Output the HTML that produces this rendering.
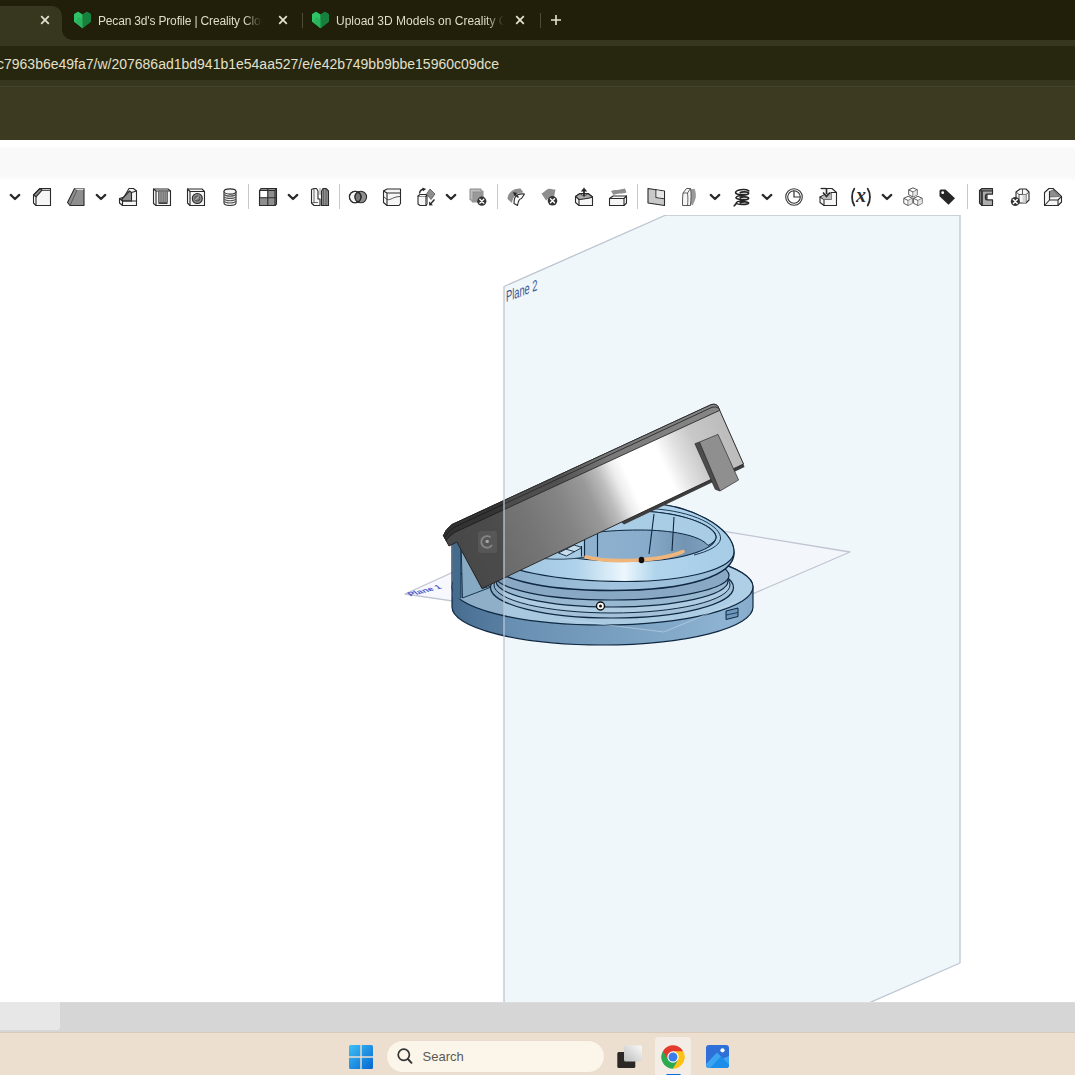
<!DOCTYPE html>
<html><head><meta charset="utf-8">
<style>
*{margin:0;padding:0;box-sizing:border-box}
html,body{width:1075px;height:1075px;overflow:hidden;background:#fff;font-family:"Liberation Sans",sans-serif}
#root{position:relative;width:1075px;height:1075px;overflow:hidden;background:#fff}
.abs{position:absolute}
#tabbar{left:0;top:0;width:1075px;height:40px;background:#211f09}
#acttab{left:-20px;top:6px;width:82px;height:36px;background:#37371f;border-radius:10px 10px 0 0}
#acttab:after{content:"";position:absolute;right:-10px;bottom:2px;width:10px;height:10px;background:radial-gradient(circle at 100% 0,rgba(0,0,0,0) 9.5px,#37371f 10px)}
.tabtxt{top:13px;font-size:12px;color:#dfddc6;white-space:nowrap;overflow:hidden;height:16px;line-height:16px}
.tabx{top:12px;width:16px;height:16px}
.sep{top:13px;width:1px;height:15px;background:#4e4c33}
#navbar{left:0;top:40px;width:1075px;height:46px;background:#37371f}
#pill{left:-20px;top:6px;width:1115px;height:34px;background:#27260e}
#url{left:-3px;top:15px;font-size:14px;color:#e2e0cb;white-space:nowrap;line-height:18px}
#bm{left:0;top:86px;width:1075px;height:54px;background:#3c3a21;border-top:1px solid #45442b}
#band{left:0;top:140px;width:1075px;height:41px;background:linear-gradient(#fff 0,#fff 6px,#f9f9f9 9px,#f9f9f9 37px,#fff 41px)}
#tb{left:0;top:177px;width:1075px;height:38px;background:transparent}
.ic{top:10px;width:20px;height:20px;overflow:visible}
.tsep{top:7px;width:1px;height:25px;background:#c9c9c9}
#canvas{left:0;top:215px;width:1075px;height:787px;background:#fff;overflow:hidden}
#grey{left:0;top:1002px;width:1075px;height:30px;background:#d6d6d7;border-top:1px solid #dcdcdc}
#greytab{left:0;top:-1px;width:60px;height:28px;background:#e8e7e8;border-radius:0 0 3px 0}
#task{left:0;top:1032px;width:1075px;height:43px;background:#ecdfd0;border-top:1px solid #d9c9bb}
</style></head><body>
<div id="root">
<div id="tabbar" class="abs">
  <div id="acttab" class="abs"></div>
  <svg class="abs tabx" style="left:37px" viewBox="0 0 16 16"><path d="M4.200 4.200l7.600 7.600M11.800 4.200l-7.600 7.600" stroke="#e6e4d0" stroke-width="1.700" fill="none"/></svg>
  <svg class="abs" style="left:73px;top:11px" width="19" height="18" viewBox="0 0 19 18"><path d="M1 3.2 5 .8 9.500 3.600 14 .8 18 3.200V10.500L9.500 17.200 1 10.500Z" fill="#1f9a4c"/><path d="M1 3.200 5 .8 9.500 3.600V17.200L1 10.500Z" fill="#2fc266"/><path d="M9.500 3.600 14 .8 18 3.200V10.500L9.500 17.200Z" fill="#17803d"/><path d="M5 6 9.500 8.500V17.200L3 11Z" fill="#27ad58" opacity=".7"/></svg>
  <div class="abs tabtxt" style="left:98px;width:170px;letter-spacing:-.17px;-webkit-mask-image:linear-gradient(90deg,#000 0,#000 146px,transparent 164px)">Pecan 3d's Profile | Creality Cloud</div>
  <svg class="abs tabx" style="left:275px" viewBox="0 0 16 16"><path d="M4.200 4.200l7.600 7.600M11.800 4.200l-7.600 7.600" stroke="#e6e4d0" stroke-width="1.700" fill="none"/></svg>
  <div class="abs sep" style="left:302px"></div>
  <svg class="abs" style="left:311px;top:11px" width="19" height="18" viewBox="0 0 19 18"><path d="M1 3.2 5 .8 9.500 3.600 14 .8 18 3.200V10.500L9.500 17.200 1 10.500Z" fill="#1f9a4c"/><path d="M1 3.200 5 .8 9.500 3.600V17.200L1 10.500Z" fill="#2fc266"/><path d="M9.500 3.600 14 .8 18 3.200V10.500L9.500 17.200Z" fill="#17803d"/><path d="M5 6 9.500 8.500V17.200L3 11Z" fill="#27ad58" opacity=".7"/></svg>
  <div class="abs tabtxt" style="left:336px;width:170px;-webkit-mask-image:linear-gradient(90deg,#000 0,#000 150px,transparent 168px)">Upload 3D Models on Creality Cloud</div>
  <svg class="abs tabx" style="left:512px" viewBox="0 0 16 16"><path d="M4.200 4.200l7.600 7.600M11.800 4.200l-7.600 7.600" stroke="#e6e4d0" stroke-width="1.700" fill="none"/></svg>
  <div class="abs sep" style="left:540px"></div>
  <svg class="abs tabx" style="left:548px" viewBox="0 0 16 16"><path d="M8 3v10M3 8h10" stroke="#e6e4d0" stroke-width="1.600" fill="none"/></svg>
</div>
<div id="navbar" class="abs"><div id="pill" class="abs"></div>
  <div id="url" class="abs">c7963b6e49fa7/w/207686ad1bd941b1e54aa527/e/e42b749bb9bbe15960c09dce</div>
</div>
<div id="bm" class="abs"></div>
<div id="band" class="abs"></div>
<div id="tb" class="abs">
<svg class="abs ic" style="left:4.5px" viewBox="0 0 20 20"><path d="M5.700 7.900 10 12 14.300 7.900" fill="none" stroke="#2a2a2a" stroke-width="2.200" stroke-linecap="round" stroke-linejoin="round"/></svg>
<svg class="abs ic" style="left:32px" viewBox="0 0 20 20"><path d="M1.5 8 8 1.5H18.5V18.5H4L1.5 16Z" fill="#f6f6f6" stroke="#2a2a2a" stroke-width="1.1" stroke-linejoin="round" stroke-linecap="round"/><path d="M1.5 8 8 1.5 10 3.2 4 9.8Z" fill="#8e8e8e" stroke="#2a2a2a" stroke-width="1.1" stroke-linejoin="round" stroke-linecap="round"/><path d="M4 9.8V18.5M10 3.2H18.5" fill="none" stroke="#2a2a2a" stroke-width="1.1" stroke-linejoin="round" stroke-linecap="round"/></svg>
<svg class="abs ic" style="left:66px" viewBox="0 0 20 20"><path d="M8.5 1.5H18V18.5H4L1.5 15.5Z" fill="#8e8e8e" stroke="#2a2a2a" stroke-width="1.1" stroke-linejoin="round" stroke-linecap="round"/><path d="M8.5 1.5 11 3 4 18.5" fill="none" stroke="#555" stroke-width=".9"/><path d="M8.5 1.5H18L17 3H11Z" fill="#ddd" stroke="none"/></svg>
<svg class="abs ic" style="left:90.5px" viewBox="0 0 20 20"><path d="M5.700 7.900 10 12 14.300 7.900" fill="none" stroke="#2a2a2a" stroke-width="2.200" stroke-linecap="round" stroke-linejoin="round"/></svg>
<svg class="abs ic" style="left:118px" viewBox="0 0 20 20"><path d="M11 1.5H15.5L18.5 4V18.5H4.5L1.5 16V11.5L6 10Z" fill="#f6f6f6" stroke="#2a2a2a" stroke-width="1.1" stroke-linejoin="round" stroke-linecap="round"/><path d="M11.5 4 13.5 5.5V14H5L3.5 12.5Z" fill="#8e8e8e" stroke="#2a2a2a" stroke-width="1.1" stroke-linejoin="round" stroke-linecap="round"/><path d="M13.5 5.5 18.5 4M13.5 14H18.5M1.5 11.5 4.5 14V18.5M4.5 14H13.5" fill="none" stroke="#2a2a2a" stroke-width="1.1" stroke-linejoin="round" stroke-linecap="round"/></svg>
<svg class="abs ic" style="left:152px" viewBox="0 0 20 20"><path d="M1.5 2H16L18.5 4V18.5H4L1.5 16.5Z" fill="#f6f6f6" stroke="#2a2a2a" stroke-width="1.1" stroke-linejoin="round" stroke-linecap="round"/><path d="M4 4H18.5M4 4V18.5M1.5 2 4 4" fill="none" stroke="#2a2a2a" stroke-width="1.1" stroke-linejoin="round" stroke-linecap="round"/><path d="M6.5 4H15.5V15.5H6.5Z" fill="#8e8e8e" stroke="#555" stroke-width=".8"/><path d="M9 4V15.5M11.5 4V15.5M13.5 4V15.5" stroke="#777" stroke-width=".7"/><path d="M6.5 16.3H15.5" stroke="#2a2a2a" stroke-width="1.2"/></svg>
<svg class="abs ic" style="left:186px" viewBox="0 0 20 20"><path d="M1.5 2H16L18.5 4.5V18.5H4L1.5 16Z" fill="#f6f6f6" stroke="#2a2a2a" stroke-width="1.1" stroke-linejoin="round" stroke-linecap="round"/><path d="M4 4.5H18.5M4 4.5V18.5M1.5 2 4 4.5" fill="none" stroke="#2a2a2a" stroke-width="1.1" stroke-linejoin="round" stroke-linecap="round"/><circle cx="11.3" cy="11.5" r="5" fill="#8e8e8e" stroke="#2a2a2a" stroke-width="1.1" stroke-linejoin="round" stroke-linecap="round"/><circle cx="11.3" cy="11.5" r="2.6" fill="#777" stroke="#444" stroke-width=".8"/><path d="M9.3 12.8 13 9.6" stroke="#ccc" stroke-width="1"/></svg>
<svg class="abs ic" style="left:219.5px" viewBox="0 0 20 20"><path d="M4 4.5V16C4 19.3 16 19.3 16 16V4.5" fill="#f6f6f6" stroke="#2a2a2a" stroke-width="1.1" stroke-linejoin="round" stroke-linecap="round"/><ellipse cx="10" cy="4.5" rx="6" ry="2.6" fill="#f6f6f6" stroke="#2a2a2a" stroke-width="1.1" stroke-linejoin="round" stroke-linecap="round"/><path d="M4 7.5C6 9.6 14 9.6 16 7.5M4 9.8C6 11.9 14 11.9 16 9.8M4 12.1C6 14.2 14 14.2 16 12.1M4 14.4C6 16.5 14 16.5 16 14.4" fill="none" stroke="#555" stroke-width="1.1"/></svg>
<div class="abs tsep" style="left:248px"></div>
<svg class="abs ic" style="left:257.5px" viewBox="0 0 20 20"><path d="M1.5 3.5 3 1.5H18.5V17L17 18.5H1.5Z" fill="#8e8e8e" stroke="#2a2a2a" stroke-width="1.1" stroke-linejoin="round" stroke-linecap="round"/><rect x="2.5" y="4" width="7" height="6.5" fill="#fff" stroke="none"/><path d="M1.5 3.5H17V18.5M17 3.5 18.5 1.5M9.8 2V18.5M1.5 10.8H18" fill="none" stroke="#2a2a2a" stroke-width="1.1" stroke-linejoin="round" stroke-linecap="round"/></svg>
<svg class="abs ic" style="left:282.5px" viewBox="0 0 20 20"><path d="M5.700 7.900 10 12 14.300 7.900" fill="none" stroke="#2a2a2a" stroke-width="2.200" stroke-linecap="round" stroke-linejoin="round"/></svg>
<svg class="abs ic" style="left:309.5px" viewBox="0 0 20 20"><path d="M1.5 2.5 4 1.5H6.5L8 4V12H10V18.5H4L1.5 16Z" fill="#f6f6f6" stroke="#2a2a2a" stroke-width="1.1" stroke-linejoin="round" stroke-linecap="round"/><path d="M4 1.5V15.5H8M4 15.5 1.5 16" fill="none" stroke="#444" stroke-width=".8"/><path d="M11.5 12V4L13 1.5H16L18.5 4V18.5H11.5Z" fill="#8e8e8e" stroke="#2a2a2a" stroke-width="1.1" stroke-linejoin="round" stroke-linecap="round"/><path d="M13.5 2V18M16 2V18" stroke="#555" stroke-width=".8"/><path d="M10 1V8" stroke="#888" stroke-width=".9"/></svg>
<div class="abs tsep" style="left:338.5px"></div>
<svg class="abs ic" style="left:347.5px" viewBox="0 0 20 20"><circle cx="7.2" cy="10" r="5.8" fill="#f6f6f6" stroke="#2a2a2a" stroke-width="1.1" stroke-linejoin="round" stroke-linecap="round"/><circle cx="12.8" cy="10" r="5.8" fill="#8e8e8e" stroke="#2a2a2a" stroke-width="1.1" stroke-linejoin="round" stroke-linecap="round"/><path d="M10 4.9A5.8 5.8 0 0 1 10 15.1A5.8 5.8 0 0 1 10 4.9Z" fill="#777" stroke="#2a2a2a" stroke-width="1.1" stroke-linejoin="round" stroke-linecap="round"/><circle cx="7.2" cy="10" r="5.8" fill="none" stroke="#2a2a2a" stroke-width="1.1" stroke-linejoin="round" stroke-linecap="round"/></svg>
<svg class="abs ic" style="left:382px" viewBox="0 0 20 20"><path d="M1.5 4 5 2H18.5V16.5L17 18.5H5L1.5 15.5Z" fill="#f6f6f6" stroke="#2a2a2a" stroke-width="1.1" stroke-linejoin="round" stroke-linecap="round"/><path d="M1.5 4 5 6H18.5M5 6V18.5" fill="none" stroke="#2a2a2a" stroke-width="1.1" stroke-linejoin="round" stroke-linecap="round"/><path d="M1.5 9.5 5 12.5C9 13.5 11 9.5 18.5 9.5" fill="none" stroke="#444" stroke-width=".9"/></svg>
<svg class="abs ic" style="left:415.5px" viewBox="0 0 20 20"><path d="M2 9H10V18.5H4L2 17Z" fill="#f6f6f6" stroke="#2a2a2a" stroke-width="1.1" stroke-linejoin="round" stroke-linecap="round"/><path d="M2 9 4 7.5H11L10 9M11 7.5V17L10 18.5" fill="#f6f6f6" stroke="#2a2a2a" stroke-width="1.1" stroke-linejoin="round" stroke-linecap="round"/><path d="M14 2 19 7 15 12.5 10.5 7Z" fill="#8e8e8e" stroke="#555" stroke-width=".8"/><path d="M3.5 6.5C3.8 4 5.5 2.3 8 2" fill="none" stroke="#2a2a2a" stroke-width="1.4"/><path d="M6.3 .6 10.2 2 7 4.3Z" fill="#2a2a2a"/><path d="M18.5 12.5 14 17.5" stroke="#2a2a2a" stroke-width="1.5"/><path d="M13 14.5 13.2 18.6 17 18.2Z" fill="#2a2a2a"/></svg>
<svg class="abs ic" style="left:440.5px" viewBox="0 0 20 20"><path d="M5.700 7.900 10 12 14.300 7.900" fill="none" stroke="#2a2a2a" stroke-width="2.200" stroke-linecap="round" stroke-linejoin="round"/></svg>
<svg class="abs ic" style="left:468px" viewBox="0 0 20 20"><path d="M2 2H13V4H15V15H4V13H2Z" fill="#bdbdbd" stroke="#8a8a8a" stroke-width="1"/><rect x="5" y="5" width="9" height="9" fill="#9a9a9a" stroke="#8a8a8a" stroke-width=".8"/><circle cx="13.8" cy="14.2" r="4.6" fill="#333"/><path d="M11.868 12.267999999999999l3.8639999999999994 3.8639999999999994M15.732000000000001 12.267999999999999l-3.8639999999999994 3.8639999999999994" stroke="#fff" stroke-width="1.4" stroke-linecap="round"/></svg>
<div class="abs tsep" style="left:496.5px"></div>
<svg class="abs ic" style="left:506px" viewBox="0 0 20 20"><path d="M1.5 12C2 5 8 1 14.5 1.5L17.5 5.5C11 6 7 9 6 16Z" fill="#8e8e8e" stroke="none"/><path d="M9 10.5C11 7 14 6.5 18.5 7L15.5 11.5C13 12 12 14 11.5 18.5L8 16.5C8 14 8.2 12 9 10.5Z" fill="#fff" stroke="#2a2a2a" stroke-width="1.1" stroke-linejoin="round" stroke-linecap="round"/><path d="M8.2 6.5 12.5 10.5" stroke="#2a2a2a" stroke-width="1.4"/><path d="M7 5 11.2 6 8.4 9Z" fill="#2a2a2a"/></svg>
<svg class="abs ic" style="left:540px" viewBox="0 0 20 20"><path d="M1.5 6.5C4 5.5 5.5 3 8 2C11 1 13 3 15.5 2.5L14 10C11 12 8 11 6 13.5Z" fill="#8e8e8e" stroke="none"/><circle cx="12.5" cy="13.8" r="4.8" fill="#333"/><path d="M10.484 11.784l4.032 4.032M14.516 11.784l-4.032 4.032" stroke="#fff" stroke-width="1.4" stroke-linecap="round"/></svg>
<svg class="abs ic" style="left:574px" viewBox="0 0 20 20"><path d="M1.5 9.5 6 6.5H14L18.5 10V18.5H5L1.5 15.5Z" fill="#f6f6f6" stroke="#2a2a2a" stroke-width="1.1" stroke-linejoin="round" stroke-linecap="round"/><path d="M6 6.5C8 9 12 9 14 6.5L18.5 10C14 12 9 12 5 12.5L1.5 9.5Z" fill="#aaa" stroke="#2a2a2a" stroke-width="1.1" stroke-linejoin="round" stroke-linecap="round"/><path d="M5 12.5V18.5" fill="none" stroke="#2a2a2a" stroke-width="1.1" stroke-linejoin="round" stroke-linecap="round"/><path d="M10 9.5V4" stroke="#2a2a2a" stroke-width="1.8"/><path d="M6.8 4.6 10 .6 13.2 4.6Z" fill="#2a2a2a"/></svg>
<svg class="abs ic" style="left:608px" viewBox="0 0 20 20"><path d="M3 4C6 2.5 9 3.5 12 2.5C14 2 15.5 2 17 1.5L18.5 5.5C15 7 9 6 5.5 8Z" fill="#8e8e8e" stroke="none"/><path d="M1.5 11.5 5 9H18.5V16L16 18.5H1.5Z" fill="#f6f6f6" stroke="#2a2a2a" stroke-width="1.1" stroke-linejoin="round" stroke-linecap="round"/><path d="M1.5 11.5H16V18.5M16 11.5 18.5 9" fill="none" stroke="#2a2a2a" stroke-width="1.1" stroke-linejoin="round" stroke-linecap="round"/></svg>
<div class="abs tsep" style="left:636.5px"></div>
<svg class="abs ic" style="left:646px" viewBox="0 0 20 20"><path d="M2 1.5 18.5 4V18.5L2 16Z" fill="#c9c9c9" stroke="#2a2a2a" stroke-width="1.1" stroke-linejoin="round" stroke-linecap="round"/><path d="M10 2.8V10.5L18.5 11.8" fill="none" stroke="#2a2a2a" stroke-width="1.1" stroke-linejoin="round" stroke-linecap="round"/><path d="M10.5 3.3 18 4.4V11.2L10.500 10.100Z" fill="#e6e6e6" stroke="none"/></svg>
<svg class="abs ic" style="left:679.5px" viewBox="0 0 20 20"><path d="M10 2.500C13 1.500 14 2.500 14.500 1.500C16 5 16.500 10 15 13C14.500 15 13 16.500 13 18.500L10.500 17C10.500 13 11 8 10 2.500Z" fill="#9a9a9a" stroke="none"/><path d="M3 6 6.500 1.500H10.500C11.500 6 11 12 10.500 18.500H2.500C2.500 14 2.500 10 3 6Z" fill="#f6f6f6" stroke="#555" stroke-width="1"/><path d="M3 6H7.500C8 10 8 14 7.500 18.500M7.500 6 10.500 1.500" fill="none" stroke="#555" stroke-width=".9"/></svg>
<svg class="abs ic" style="left:704.5px" viewBox="0 0 20 20"><path d="M5.700 7.900 10 12 14.300 7.900" fill="none" stroke="#2a2a2a" stroke-width="2.200" stroke-linecap="round" stroke-linejoin="round"/></svg>
<svg class="abs ic" style="left:731.5px" viewBox="0 0 20 20"><path d="M16.800 3.800C13 1.200 3.500 2.800 3.600 5.600C3.700 8.300 16.300 8.200 16.600 6.100C16.800 4.600 9.500 4.600 8.200 5.600M16.600 6.100C17.400 8.600 4 8 4 10.600C4 13.200 16.300 13.200 16.600 11.100C16.800 9.600 9.500 9.600 8.200 10.600M16.600 11.100C17.400 13.600 4.400 13.200 4.400 15.700C4.400 18 16.300 17.800 16.600 16C16.800 14.600 9.500 14.600 8.200 15.600M4.400 15.700C4.200 17.300 3 17.900 2.200 18.800" fill="none" stroke="#222" stroke-width="1.600" stroke-linecap="round"/></svg>
<svg class="abs ic" style="left:756.5px" viewBox="0 0 20 20"><path d="M5.700 7.900 10 12 14.300 7.900" fill="none" stroke="#2a2a2a" stroke-width="2.200" stroke-linecap="round" stroke-linejoin="round"/></svg>
<svg class="abs ic" style="left:783.5px" viewBox="0 0 20 20"><circle cx="10" cy="10" r="8.300" fill="#fff" stroke="#333" stroke-width="1.100"/><circle cx="10" cy="10" r="6.300" fill="none" stroke="#333" stroke-width="1.100"/><path d="M10 3.700V10H16.300" fill="none" stroke="#333" stroke-width="1.200"/></svg>
<svg class="abs ic" style="left:817.5px" viewBox="0 0 20 20"><path d="M3 1.500H14L18.500 5.500V18.500H6L2 15.500V10L6 8" fill="#f6f6f6" stroke="#2a2a2a" stroke-width="1.1" stroke-linejoin="round" stroke-linecap="round"/><path d="M2 10 6 12.500H13V5.500H18.500M6 12.500V18.500" fill="none" stroke="#2a2a2a" stroke-width="1.1" stroke-linejoin="round" stroke-linecap="round"/><path d="M9 5.500 13 7.500V12.500H6L3.500 10.500Z" fill="#bbb" stroke="none"/><path d="M8.500 1V7" stroke="#2a2a2a" stroke-width="1.600"/><path d="M5 5.500 8.500 9.500 12 5.500" fill="none" stroke="#2a2a2a" stroke-width="1.600"/><path d="M3 1.500H8" stroke="#2a2a2a" stroke-width="1.300"/></svg>
<svg class="abs ic" style="left:851px" viewBox="0 0 20 20"><text x="10" y="15.300" style="font:italic bold 20px 'Liberation Serif',serif" text-anchor="middle" fill="#2a2a2a">x</text><path d="M3.300 1.800C.300 6 .300 14 3.300 18.600M16.700 1.800C19.700 6 19.700 14 16.700 18.600" fill="none" stroke="#2a2a2a" stroke-width="1.800" stroke-linecap="round"/></svg>
<svg class="abs ic" style="left:876.5px" viewBox="0 0 20 20"><path d="M5.700 7.900 10 12 14.300 7.900" fill="none" stroke="#2a2a2a" stroke-width="2.200" stroke-linecap="round" stroke-linejoin="round"/></svg>
<svg class="abs ic" style="left:903px" viewBox="0 0 20 20"><g transform="translate(5.7 0.8)"><path d="M0 2 4.300 0 8.600 2V7L4.300 9.200 0 7Z" fill="#fff" stroke="#444" stroke-width=".9" stroke-linejoin="round"/><path d="M0 2 4.300 4.200 8.600 2M4.300 4.200V9.200" fill="none" stroke="#444" stroke-width=".9"/><path d="M4.300 4.200 8.600 2V7L4.300 9.200Z" fill="#ddd" stroke="none" opacity=".7"/></g><g transform="translate(0.8 9.3)"><path d="M0 2 4.300 0 8.600 2V7L4.300 9.200 0 7Z" fill="#fff" stroke="#444" stroke-width=".9" stroke-linejoin="round"/><path d="M0 2 4.300 4.200 8.600 2M4.300 4.200V9.200" fill="none" stroke="#444" stroke-width=".9"/><path d="M4.300 4.200 8.600 2V7L4.300 9.200Z" fill="#ddd" stroke="none" opacity=".7"/></g><g transform="translate(10.6 9.3)"><path d="M0 2 4.300 0 8.600 2V7L4.300 9.200 0 7Z" fill="#fff" stroke="#444" stroke-width=".9" stroke-linejoin="round"/><path d="M0 2 4.300 4.200 8.600 2M4.300 4.200V9.200" fill="none" stroke="#444" stroke-width=".9"/><path d="M4.300 4.200 8.600 2V7L4.300 9.200Z" fill="#ddd" stroke="none" opacity=".7"/></g></svg>
<svg class="abs ic" style="left:937px" viewBox="0 0 20 20"><path d="M2.500 4V9.300L11.500 17.800 18 11.300 8.500 2.500H4A1.500 1.500 0 0 0 2.500 4Z" fill="#262626"/><circle cx="5.700" cy="5.700" r="1.400" fill="#fff"/></svg>
<div class="abs tsep" style="left:966.5px"></div>
<svg class="abs ic" style="left:975.5px" viewBox="0 0 20 20"><path d="M3.500 3.500 6 1.500H16.500V7H11V13H16.500V18.500H6L3.500 16Z" fill="#7d7d7d" stroke="#2a2a2a" stroke-width="1.1" stroke-linejoin="round" stroke-linecap="round"/><path d="M6 4H16.500V7H11C8.800 7 8.800 13 11 13H16.500V18.500H6Z" fill="#adadad" stroke="#2a2a2a" stroke-width="1.1" stroke-linejoin="round" stroke-linecap="round"/><path d="M3.500 3.500 6 4V18.500" fill="none" stroke="#2a2a2a" stroke-width="1.1" stroke-linejoin="round" stroke-linecap="round"/></svg>
<svg class="abs ic" style="left:1009.5px" viewBox="0 0 20 20"><path d="M6 5 10 2H16L19 5V13L16 16H9L6 13Z" fill="#f6f6f6" stroke="#2a2a2a" stroke-width="1.1" stroke-linejoin="round" stroke-linecap="round"/><path d="M6 5 9 7.500H16L19 5M9 7.500V16M12.500 2V7.500M16 7.500V16" fill="none" stroke="#444" stroke-width=".9"/><path d="M12.500 7.500H16V16H12.500Z" fill="#ccc" stroke="none" opacity=".8"/><circle cx="5.3" cy="14.5" r="4.5" fill="#333"/><path d="M3.41 12.61l3.78 3.78M7.1899999999999995 12.61l-3.78 3.78" stroke="#fff" stroke-width="1.4" stroke-linecap="round"/></svg>
<svg class="abs ic" style="left:1043px" viewBox="0 0 20 20"><path d="M1.500 5.500 6 1.500H10L18.500 9.500V15L15 18.500H1.500Z" fill="#f6f6f6" stroke="#2a2a2a" stroke-width="1.1" stroke-linejoin="round" stroke-linecap="round"/><path d="M6.500 4.500 10 3 16.500 9.500 6.500 10Z" fill="#8e8e8e" stroke="#555" stroke-width=".7"/><path d="M6.500 4.500V13H15M6.500 13 1.500 18.500M15 13V18.500M15 13 18.500 9.500" fill="none" stroke="#2a2a2a" stroke-width="1.1" stroke-linejoin="round" stroke-linecap="round"/></svg>
</div>
<div id="canvas" class="abs">
<svg class="abs" style="left:0;top:0" width="1075" height="787" viewBox="0 215 1075 787">
<defs>
<linearGradient id="lidg" gradientUnits="userSpaceOnUse" x1="469.500" y1="565.500" x2="730.500" y2="444.800">
<stop offset="0" stop-color="#686868"/><stop offset=".13" stop-color="#6c6c6c"/><stop offset=".25" stop-color="#757575"/><stop offset=".38" stop-color="#848484"/><stop offset=".48" stop-color="#999"/><stop offset=".54" stop-color="#bcbcbc"/><stop offset=".59" stop-color="#ececec"/><stop offset=".63" stop-color="#fff"/><stop offset=".76" stop-color="#fff"/><stop offset=".82" stop-color="#e2e2e2"/><stop offset=".89" stop-color="#c8c8c8"/><stop offset="1" stop-color="#bdbdbd"/>
</linearGradient>
<linearGradient id="rimg" gradientUnits="userSpaceOnUse" x1="469.500" y1="565.500" x2="730.500" y2="444.800">
<stop offset="0" stop-color="#484848"/><stop offset=".4" stop-color="#505050"/><stop offset=".6" stop-color="#7a7a7a"/><stop offset="1" stop-color="#868686"/>
</linearGradient>
<linearGradient id="baseg" gradientUnits="userSpaceOnUse" x1="452" y1="0" x2="753" y2="0">
<stop offset="0" stop-color="#4f7699"/><stop offset=".06" stop-color="#5a82a5"/><stop offset=".17" stop-color="#668eb1"/><stop offset=".36" stop-color="#7097b8"/><stop offset=".66" stop-color="#7fa5c5"/><stop offset=".92" stop-color="#8fb4d3"/><stop offset="1" stop-color="#86abca"/>
</linearGradient>
<linearGradient id="topg" gradientUnits="userSpaceOnUse" x1="452" y1="0" x2="753" y2="0">
<stop offset="0" stop-color="#a6c6de"/><stop offset=".5" stop-color="#aacae1"/><stop offset="1" stop-color="#afcfe6"/>
</linearGradient>
<linearGradient id="bandA" gradientUnits="userSpaceOnUse" x1="490" y1="0" x2="734" y2="0">
<stop offset="0" stop-color="#9cc0dc"/><stop offset=".35" stop-color="#aed2ea"/><stop offset=".55" stop-color="#ecf7fd"/><stop offset=".68" stop-color="#b0d4ec"/><stop offset="1" stop-color="#a6cce6"/>
</linearGradient>
<linearGradient id="bandB" gradientUnits="userSpaceOnUse" x1="490" y1="0" x2="734" y2="0">
<stop offset="0" stop-color="#86a9c6"/><stop offset=".5" stop-color="#a2c4de"/><stop offset="1" stop-color="#96bad6"/>
</linearGradient>
<linearGradient id="holeg" gradientUnits="userSpaceOnUse" x1="560" y1="0" x2="716" y2="0">
<stop offset="0" stop-color="#90b4d0"/><stop offset=".55" stop-color="#88accb"/><stop offset=".8" stop-color="#7394b3"/><stop offset="1" stop-color="#82a5c3"/>
</linearGradient>
<path id="basep" d="M452 540V607A150.500 38 0 0 0 753 607V587A150.500 38 0 0 0 452 587Z"/>
<path id="ringp" d="M490 560C490 540 560 503 640 503C690 503 734 528 734 553C734 575 690 590.500 612 590.500C540 590.500 490 578 490 560Z"/>
<clipPath id="cv"><rect x="0" y="215" width="1075" height="787"/></clipPath>
<clipPath id="mclip"><use href="#basep"/><ellipse cx="602.500" cy="587" rx="150.500" ry="38"/><use href="#ringp"/><path d="M452 540H461L482 588.500 500.500 583.500 462.500 598H452Z"/></clipPath>
</defs>
<g clip-path="url(#cv)" stroke-linejoin="round">
<!-- plane 2 fill -->
<path d="M504 286.500 666 215H960V963L846 1013H504Z" fill="#cde4ee" fill-opacity=".3"/>
<!-- plane 1 (horizontal) -->
<path d="M405 594 591 509.500 850 552 664 632Z" fill="#f4f6fc" fill-opacity=".8" stroke="#c0c5d2" stroke-width="1.300"/>
<text transform="matrix(.76 -.2 .5 .45 410.500 596.500)" font-size="12" font-weight="bold" fill="#4a5acb" font-family="Liberation Sans,sans-serif">Plane 1</text>
<g stroke="#0f2740">
<!-- base -->
<use href="#basep" fill="url(#baseg)" stroke-width="1.200"/>
<ellipse cx="602.500" cy="587" rx="150.500" ry="38" fill="url(#topg)" stroke-width="1.200"/>
<!-- plane1 seen through base -->
<path d="M560 619 664 632 738 601" fill="none" stroke="#c8dcee" stroke-opacity=".55" stroke-width="1"/>
<!-- wall -->
<path d="M452.600 540H461V599.500L452.600 597Z" fill="#4f7699" stroke="none"/><path d="M452 540H461V598" fill="none" stroke-width=".9"/>
<path d="M461 540 482 588.500 500.500 583.500 462.500 598Z" fill="#9cc0da" stroke-width=".9"/>
<!-- slot -->
<path d="M726 611 738 608V616.500L726 619.500Z" fill="#6d97bb" stroke-width="1"/>
<path d="M726 615 738 612.500" stroke-width=".8"/>
<!-- flange rings -->
<ellipse cx="612" cy="587.500" rx="121.500" ry="30.500" fill="#a3c1d9" stroke-width="1.200"/>
<ellipse cx="612" cy="585" rx="118" ry="28" fill="#adcbe1" stroke-width="1"/>
<ellipse cx="612" cy="581" rx="116" ry="26" fill="#98b7d0" stroke-width="1.200"/>
<ellipse cx="612" cy="575.500" rx="117" ry="24.500" fill="#88a8c4" stroke-width="1.200"/>
<!-- ring body (band B) -->
<use href="#ringp" fill="url(#bandB)" stroke-width="1.500"/>
<!-- ring top face (band A) -->
<path d="M492 552C492 530 560 503 640 503C690 503 734 528 734 552C734 568 690 581.500 625 581.500C560 581.500 492 570 492 552Z" fill="url(#bandA)" stroke-width="1.200"/>
<!-- hole -->
<path d="M520 538C530 522 590 510 640 511C690 513 717 528 716 538C714 550 680 561.500 628 561.500C580 561.500 515 552 520 538Z" fill="url(#holeg)" stroke-width="1.200"/>
<path d="M560 520C590 509 625 507.500 650 508.500C695 511 722 527 720.500 539C719.500 546 708 551.500 694 555" fill="none" stroke-width=".9"/>
<!-- hole inner chamfer -->
<path d="M520 538C530 522 590 510 640 511C690 513 717 528 716 538C715 541 712 543.500 708 545.500C700 535 670 530 640 530C600 530 560 535 545 548C528 546 518 542 520 538Z" fill="#aacde6" stroke-width="1"/>
<path d="M597.500 515V556.500M654 514 649 554M674 517 672 551" stroke-width="1.100" fill="none"/>
<path d="M543 558.500 584.500 539V557.200C570 559.500 556 559.800 543 558.500Z" fill="#a8cae2" stroke-width=".8"/>
<path d="M558.500 553 574 545 582 547.500 566.500 556Z" fill="#c6ddec" stroke-width=".9"/>
<path d="M566 549.200 574.500 551.600" stroke-width=".9" fill="none"/>
<path d="M584.500 539V557M581.500 546V556.500" stroke-width="1.200" fill="none"/>
</g>
<!-- darken model left of plane -->
<rect x="440" y="480" width="64" height="180" fill="#14304e" fill-opacity=".16" clip-path="url(#mclip)"/>
<!-- orange arc -->
<path d="M586 557C610 563 660 561.500 683 551.500" fill="none" stroke="#efb57b" stroke-width="3.600" stroke-linecap="round"/>
<ellipse cx="641.500" cy="560" rx="2.800" ry="3.200" fill="#111"/>
<!-- mate connector dot -->
<circle cx="600.500" cy="606" r="4" fill="#fff" stroke="#111" stroke-width="1.400"/><circle cx="600.500" cy="606" r="1.500" fill="#111"/>
<!-- lid -->
<path d="M620 521 743.500 464 744.500 467 624 524.500Z" fill="#3d3d3d"/>
<path d="M452 524.500 711 404.700Q716 403.200 718 406.500L743.500 464 482 588.500 456.900 542.100 449 546 443.400 535.600Q445 530 452 524.500Z" fill="url(#lidg)" stroke="#2b2b2b" stroke-width="1"/>
<path d="M443.400 535.600Q445 530 452 524.500L711 404.700Q716 403.200 718 406.500L719.800 410.300 455 532.200Q449.500 535.500 446 540.500Z" fill="url(#rimg)" stroke="#2a2a2a" stroke-width=".9"/>
<path d="M444.500 537.500Q447 532.500 453.500 527.500L712 407.300Q716 406 718.700 408.300" fill="none" stroke="#2a2a2a" stroke-width=".9"/>
<!-- tab -->
<path d="M694.900 443.700 699.500 442 720 491 715.300 489.300Z" fill="#4c4c4c" stroke="#2b2b2b" stroke-width=".7"/>
<path d="M699.500 442 718 434.400 738.600 480 720 491Z" fill="#8f8f8f" stroke="#2b2b2b" stroke-width=".7"/>
<!-- darken left of plane -->
<path d="M443.400 535.600Q445 530 452 524.500L504 500.400V578L482 588.500 456.900 542.100 449 546Z" fill="#000" fill-opacity=".3"/>
<!-- cam icon -->
<rect x="478" y="531" width="19" height="22" rx="2.500" fill="#fff" fill-opacity=".07"/>
<path d="M490.500 537.200A5.800 5.800 0 1 0 492 545" fill="none" stroke="#858585" stroke-width="1.900"/><circle cx="487.200" cy="541.400" r="1.700" fill="#a8a8a8"/>
<path d="M504 286.500 666 215H960V963L846 1013H504Z" fill="none" stroke="#bcc5d1" stroke-width="1.300"/>
<text transform="matrix(.6 -.225 0 1 506 302)" font-size="15.500" fill="#3f558f" font-family="Liberation Sans,sans-serif">Plane 2</text>
</g>
</svg>

</div>
<div id="grey" class="abs"><div id="greytab" class="abs"></div></div>
<div id="task" class="abs">
<svg class="abs" style="left:349px;top:11.500px" width="24" height="24" viewBox="0 0 24 24"><defs><linearGradient id="wg" x1="0" y1="0" x2="1" y2="1"><stop offset="0" stop-color="#3cc0f5"/><stop offset="1" stop-color="#0766d0"/></linearGradient></defs><path d="M0 1.500A1.500 1.500 0 0 1 1.500 0H11.300V11.300H0ZM12.700 0H22.500A1.500 1.500 0 0 1 24 1.500V11.300H12.700ZM0 12.700H11.300V24H1.500A1.500 1.500 0 0 1 0 22.500ZM12.700 12.700H24V22.500A1.500 1.500 0 0 1 22.500 24H12.700Z" fill="url(#wg)"/></svg>
<div class="abs" style="left:386.500px;top:8px;width:217.500px;height:31px;border-radius:16px;background:#fbf5ea;box-shadow:0 0 0 .5px #e6dacb"></div>
<svg class="abs" style="left:395px;top:13px" width="20" height="20" viewBox="0 0 20 20"><circle cx="8.800" cy="8.800" r="5.600" fill="none" stroke="#333" stroke-width="1.700"/><path d="M12.900 13 16.500 16.800" stroke="#333" stroke-width="1.900" stroke-linecap="round"/></svg>
<div class="abs" style="left:422.500px;top:16px;font-size:13px;line-height:16px;color:#5b5955">Search</div>
<svg class="abs" style="left:616px;top:10px" width="28" height="26" viewBox="0 0 28 26"><defs><linearGradient id="tv" x1="0" y1="1" x2="1" y2="0"><stop offset="0" stop-color="#bdbdbd"/><stop offset="1" stop-color="#fafafa"/></linearGradient></defs><rect x="1.300" y="9" width="18" height="16" rx="1.500" fill="#2b2724"/><rect x="8" y="2.500" width="18" height="16" rx="1.500" fill="url(#tv)"/></svg>
<div class="abs" style="left:654.500px;top:4px;width:36.500px;height:40px;border-radius:4px;background:#f4ede5"></div>
<svg class="abs" style="left:661px;top:11.500px" width="24" height="24" viewBox="-12 -12 24 24">
<circle r="11.500" fill="#fff"/>
<path d="M0 0 -9.960 -5.750A11.500 11.500 0 0 1 9.960 -5.750Z" fill="#e33b2e"/>
<path d="M0 0 9.960 -5.750A11.500 11.500 0 0 1 0 11.500Z" fill="#fbc116"/>
<path d="M0 0 0 11.500A11.500 11.500 0 0 1 -9.960 -5.750Z" fill="#2da94f"/>
<path d="M0 -5.750H9.960A11.500 11.500 0 0 0 -9.960 -5.750L-4.980 2.875Z" fill="#e33b2e"/>
<path d="M4.980 2.875 0 11.500A11.500 11.500 0 0 0 9.960 -5.750H0Z" fill="#fbc116"/>
<path d="M-4.980 2.875 -9.960 -5.750A11.500 11.500 0 0 0 0 11.500L4.980 2.875Z" fill="#2da94f"/>
<circle r="5.700" fill="#fff"/><circle r="4.500" fill="#3b7de8"/></svg>
<div class="abs" style="left:665.500px;top:40.500px;width:15.500px;height:3px;border-radius:1.500px 1.500px 0 0;background:#0a6cd6"></div>
<svg class="abs" style="left:706px;top:11.500px" width="23" height="23" viewBox="0 0 23 23"><rect width="23" height="23" rx="3" fill="#2f6fd8"/><path d="M0 19 11 7.500 17 13.500 23 11V20A3 3 0 0 1 20 23H3A3 3 0 0 1 0 20Z" fill="#3ba5f2"/><path d="M4 23 15 11.500 23 19.500V20A3 3 0 0 1 20 23Z" fill="#1c8de8"/><circle cx="16.500" cy="5.300" r="2.100" fill="#fff"/></svg>
</div>
</div>
</body></html>
